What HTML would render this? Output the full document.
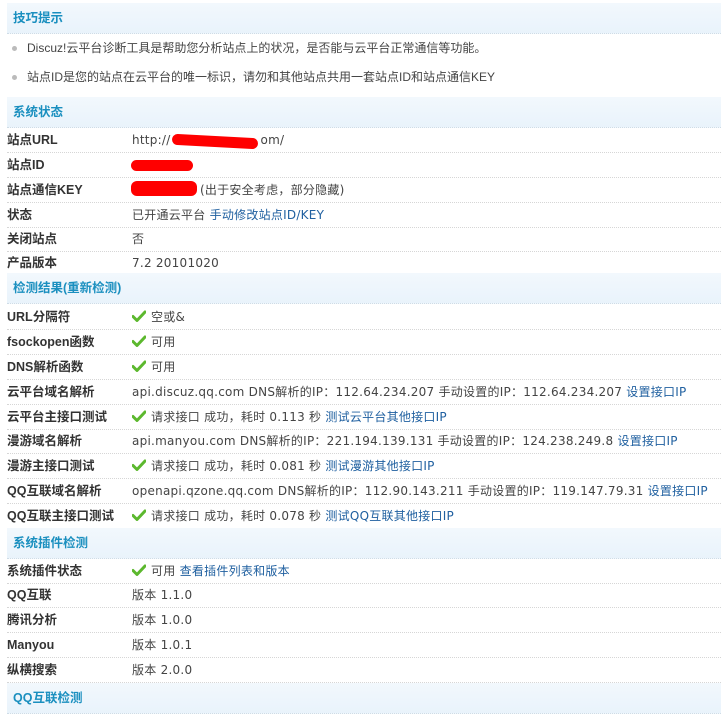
<!DOCTYPE html>
<html><head><meta charset="utf-8"><style>
body{margin:0;width:721px;height:717px;background:#fff;position:relative;overflow:hidden;font-family:"Liberation Sans","Noto Sans CJK SC",sans-serif;font-size:12px;color:#333}
.h{position:absolute;left:7px;right:0;height:30px;background:linear-gradient(#f2f8fd,#e9f3fb);border-bottom:1px dotted #cfdce6;color:#1a8fbf;font-weight:bold;line-height:30px;padding-left:6px;font-size:12.5px}
.r{position:absolute;left:7px;right:0;border-bottom:1px dotted #d6d6d6;line-height:24px;height:24px;white-space:nowrap}
.r b{position:absolute;left:0;color:#333;font-size:12.5px}
.r span{position:absolute;left:125px;color:#444;font-family:"DejaVu Sans","Noto Sans CJK SC",sans-serif;font-size:12px;letter-spacing:0.25px}
a{color:#2060a0;text-decoration:none}
.b{position:absolute;left:12px;line-height:16px;color:#444;white-space:nowrap}
.b:before{content:"";position:absolute;left:0;top:6px;width:5px;height:5px;border-radius:50%;background:#bbb}
.ck{display:inline-block;width:14px;height:12px;vertical-align:-1px;margin-right:5px}
.red{position:absolute;background:#f00;border-radius:6px}
</style></head><body>
<div class="h" style="top:3px">技巧提示</div>
<div class="b" style="top:40px;padding-left:15px">Discuz!云平台诊断工具是帮助您分析站点上的状况，是否能与云平台正常通信等功能。</div>
<div class="b" style="top:69px;padding-left:15px">站点ID是您的站点在云平台的唯一标识，请勿和其他站点共用一套站点ID和站点通信KEY</div>
<div class="h" style="top:97px">系统状态</div>
<div class="r" style="top:128px"><b>站点URL</b><span>http://<span style="position:static;display:inline-block;width:90px"></span>om/</span></div>
<div class="r" style="top:153px"><b>站点ID</b></div>
<div class="r" style="top:178px"><b>站点通信KEY</b><span><span style="position:static;display:inline-block;width:68px"></span>(出于安全考虑，部分隐藏)</span></div>
<div class="r" style="top:203px"><b>状态</b><span>已开通云平台 <a>手动修改站点ID/KEY</a></span></div>
<div class="r" style="top:227px"><b>关闭站点</b><span>否</span></div>
<div class="r" style="top:251px"><b>产品版本</b><span>7.2 20101020</span></div>
<div class="h" style="top:273px">检测结果(重新检测)</div>
<svg width="0" height="0" style="position:absolute"><defs><symbol id="c" viewBox="0 0 14 12"><path d="M1 6.5 L5 10.5 L13 2" fill="none" stroke="#5cb82e" stroke-width="3" stroke-linecap="round" stroke-linejoin="round"/></symbol></defs></svg>
<div class="r" style="top:305px"><b>URL分隔符</b><span><svg class="ck"><use href="#c"/></svg>空或&amp;</span></div>
<div class="r" style="top:330px"><b>fsockopen函数</b><span><svg class="ck"><use href="#c"/></svg>可用</span></div>
<div class="r" style="top:355px"><b>DNS解析函数</b><span><svg class="ck"><use href="#c"/></svg>可用</span></div>
<div class="r" style="top:380px"><b>云平台域名解析</b><span>api.discuz.qq.com DNS解析的IP：112.64.234.207 手动设置的IP：112.64.234.207 <a>设置接口IP</a></span></div>
<div class="r" style="top:405px"><b>云平台主接口测试</b><span><svg class="ck"><use href="#c"/></svg>请求接口 成功，耗时 0.113 秒 <a>测试云平台其他接口IP</a></span></div>
<div class="r" style="top:429px"><b>漫游域名解析</b><span>api.manyou.com DNS解析的IP：221.194.139.131 手动设置的IP：124.238.249.8 <a>设置接口IP</a></span></div>
<div class="r" style="top:454px"><b>漫游主接口测试</b><span><svg class="ck"><use href="#c"/></svg>请求接口 成功，耗时 0.081 秒 <a>测试漫游其他接口IP</a></span></div>
<div class="r" style="top:479px"><b>QQ互联域名解析</b><span>openapi.qzone.qq.com DNS解析的IP：112.90.143.211 手动设置的IP：119.147.79.31 <a>设置接口IP</a></span></div>
<div class="r" style="top:504px"><b>QQ互联主接口测试</b><span><svg class="ck"><use href="#c"/></svg>请求接口 成功，耗时 0.078 秒 <a>测试QQ互联其他接口IP</a></span></div>
<div class="h" style="top:528px">系统插件检测</div>
<div class="r" style="top:559px"><b>系统插件状态</b><span><svg class="ck"><use href="#c"/></svg>可用 <a>查看插件列表和版本</a></span></div>
<div class="r" style="top:583px"><b>QQ互联</b><span>版本 1.1.0</span></div>
<div class="r" style="top:608px"><b>腾讯分析</b><span>版本 1.0.0</span></div>
<div class="r" style="top:633px"><b>Manyou</b><span>版本 1.0.1</span></div>
<div class="r" style="top:658px"><b>纵横搜索</b><span>版本 2.0.0</span></div>
<div class="h" style="top:683px">QQ互联检测</div>
<div class="red" style="left:172px;top:136px;width:86px;height:11px;transform:rotate(3deg)"></div>
<div class="red" style="left:131px;top:160px;width:62px;height:11px"></div>
<div class="red" style="left:131px;top:181px;width:66px;height:15px"></div>
</body></html>
